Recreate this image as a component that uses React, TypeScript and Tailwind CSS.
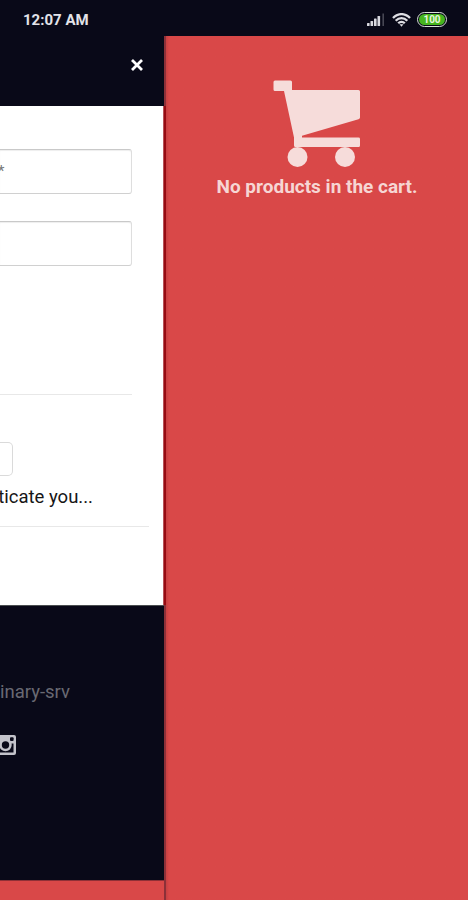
function SignalIcon() {
  return (
    <svg width="18" height="14" viewBox="0 0 18 14" fill="#d9d9e0">
      <rect x="0" y="10" width="2.6" height="3" rx="0.6" />
      <rect x="3.5" y="8" width="2.6" height="5" rx="0.6" />
      <rect x="7" y="5.5" width="2.6" height="7.5" rx="0.6" />
      <rect x="10.5" y="3" width="2.6" height="10" rx="0.6" />
      <rect x="15.4" y="0.5" width="1.6" height="12.5" fill="#474753" />
    </svg>
  );
}

function WifiIcon() {
  return (
    <svg width="19" height="14" viewBox="0 0 19 14" fill="none" stroke="#dedee3" strokeWidth="2.3">
      <path d="M1 5C6-.2 13-.2 18 5" />
      <path d="M3.7 7.8c3.4-3.5 8.2-3.5 11.6 0" />
      <path d="M6.2 10.3c1.9-2 4.7-2 6.6 0" />
      <path d="M7.5 11.3h4L9.5 13.7z" fill="#dedee3" stroke="none" />
    </svg>
  );
}

function CartIcon() {
  return (
    <svg width="88" height="88" viewBox="0 0 88 88" fill="#f6dcda">
      <path d="M2 .5h15.500Q19 .5 19 2v8h66.500Q87 10 87 11.500V37.500Q87 38.800 85.500 39.300L29 55.700V57.600H85.500Q87 57.600 87 59v6.500Q87 67 85.500 67H22.500Q21 67 21 65.500V57.500L11 11H2Q.5 11 .5 9.500V2Q.5.5 2 .5Z" />
      <circle cx="24.500" cy="77" r="10" />
      <circle cx="72" cy="77" r="10" />
    </svg>
  );
}

function InstagramIcon() {
  return (
    <svg className="shrink-0" width="20" height="20" viewBox="0 0 20 20">
      <rect width="20" height="20" rx="2" fill="#c3c3ca" />
      <path d="M2.500 8.500h15v9h-15z" fill="#090918" />
      <circle cx="9.500" cy="10" r="6.200" fill="#c3c3ca" />
      <circle cx="9.500" cy="10" r="3.700" fill="#090918" />
      <rect x="14" y="2.300" width="3.600" height="3.600" rx="1" fill="#090918" />
    </svg>
  );
}

function StatusBar() {
  return (
    <header className="flex h-9 items-center justify-between bg-[#090918] pr-[21px] pl-[23px] pt-[3px] text-[#e3e3e8]">
      <span className="text-[15px] leading-5 font-bold whitespace-nowrap">12:07 AM</span>
      <div className="flex items-center">
        <SignalIcon />
        <div className="ml-[7px] flex">
          <WifiIcon />
        </div>
        <div className="ml-[6px] flex h-[15px] w-[30px] items-center justify-center rounded-full border border-[#d8e0d8] bg-[#090918] p-px">
          <span className="flex h-full w-full items-center justify-center rounded-full bg-[#46b51f] text-[10px] leading-none font-bold text-[#e8f5df]">
            100
          </span>
        </div>
      </div>
    </header>
  );
}

function LoginForm() {
  return (
    <section className="flex h-[499px] flex-col border-r border-[#b65258] bg-white">
      <div className="mt-[43px] flex h-[45px] w-[132px] items-center rounded-r-[3px] border border-l-0 border-[#dedede] border-t-[#c9c9c9] border-b-[#d0d0d0] shadow-[inset_0_1px_1px_#eeeeee]">
        <span className="-ml-[2px] text-[15px] leading-none text-[#777777]">*</span>
      </div>
      <div className="mt-[27px] h-[45px] w-[132px] rounded-r-[3px] border border-l-0 border-[#dedede] border-t-[#c9c9c9] border-b-[#d0d0d0] shadow-[inset_0_1px_1px_#eeeeee]" />
      <div className="mt-[128px] h-px w-[132px] bg-[#e8e8e8]" />
      <div className="mt-[47px] h-[34px] w-[13px] rounded-r-[5px] border border-l-0 border-[#dadada]" />
      <p className="mt-[9px] flex w-[93px] justify-end text-[18.500px] leading-6 whitespace-nowrap text-[#161616]">
        ticate you...
      </p>
      <div className="mt-[17px] h-px w-[149px] bg-[#e8e8e8]" />
    </section>
  );
}

function Footer() {
  return (
    <footer className="flex h-[275px] flex-col border-t border-[#4a4e50] bg-[#090918]">
      <p className="mt-[74px] flex w-[70px] justify-end text-[18.500px] leading-6 whitespace-nowrap text-[#696973]">
        inary-srv
      </p>
      <div className="mt-[31px] flex w-4 justify-end">
        <InstagramIcon />
      </div>
    </footer>
  );
}

export default function App() {
  return (
    <div className="flex h-[900px] w-[468px] flex-col overflow-hidden bg-[#d94848] font-[Roboto,sans-serif]">
      <StatusBar />
      <div className="flex flex-1">
        <main className="flex w-[164px] shrink-0 flex-col overflow-hidden">
          <div className="flex h-[70px] justify-end bg-[#090918] pt-[22px] pr-[20px]">
            <svg width="14" height="14" viewBox="0 0 14 14" stroke="#ffffff" strokeWidth="2.800">
              <path d="M2 2l10 10M12 2L2 12" />
            </svg>
          </div>
          <LoginForm />
          <Footer />
          <div className="flex-1 border-t border-[#8f3036] bg-[#d94848]" />
        </main>
        {/* dark seam along the drawer's left edge */}
        <div className="flex w-[2px] shrink-0 flex-col">
          <div className="h-[70px] bg-[#8c3038]" />
          <div className="h-[499px] bg-[#960b12]" />
          <div className="flex-1 bg-[#8c3038]" />
        </div>
        <aside className="flex flex-1 flex-col items-center bg-linear-to-r from-[#c74042] to-[#d94848] to-[3px] pt-11">
          <CartIcon />
          <p className="mt-[7px] text-[19px] leading-6 font-bold whitespace-nowrap text-[#f6d6d4]">
            No products in the cart.
          </p>
        </aside>
      </div>
    </div>
  );
}
